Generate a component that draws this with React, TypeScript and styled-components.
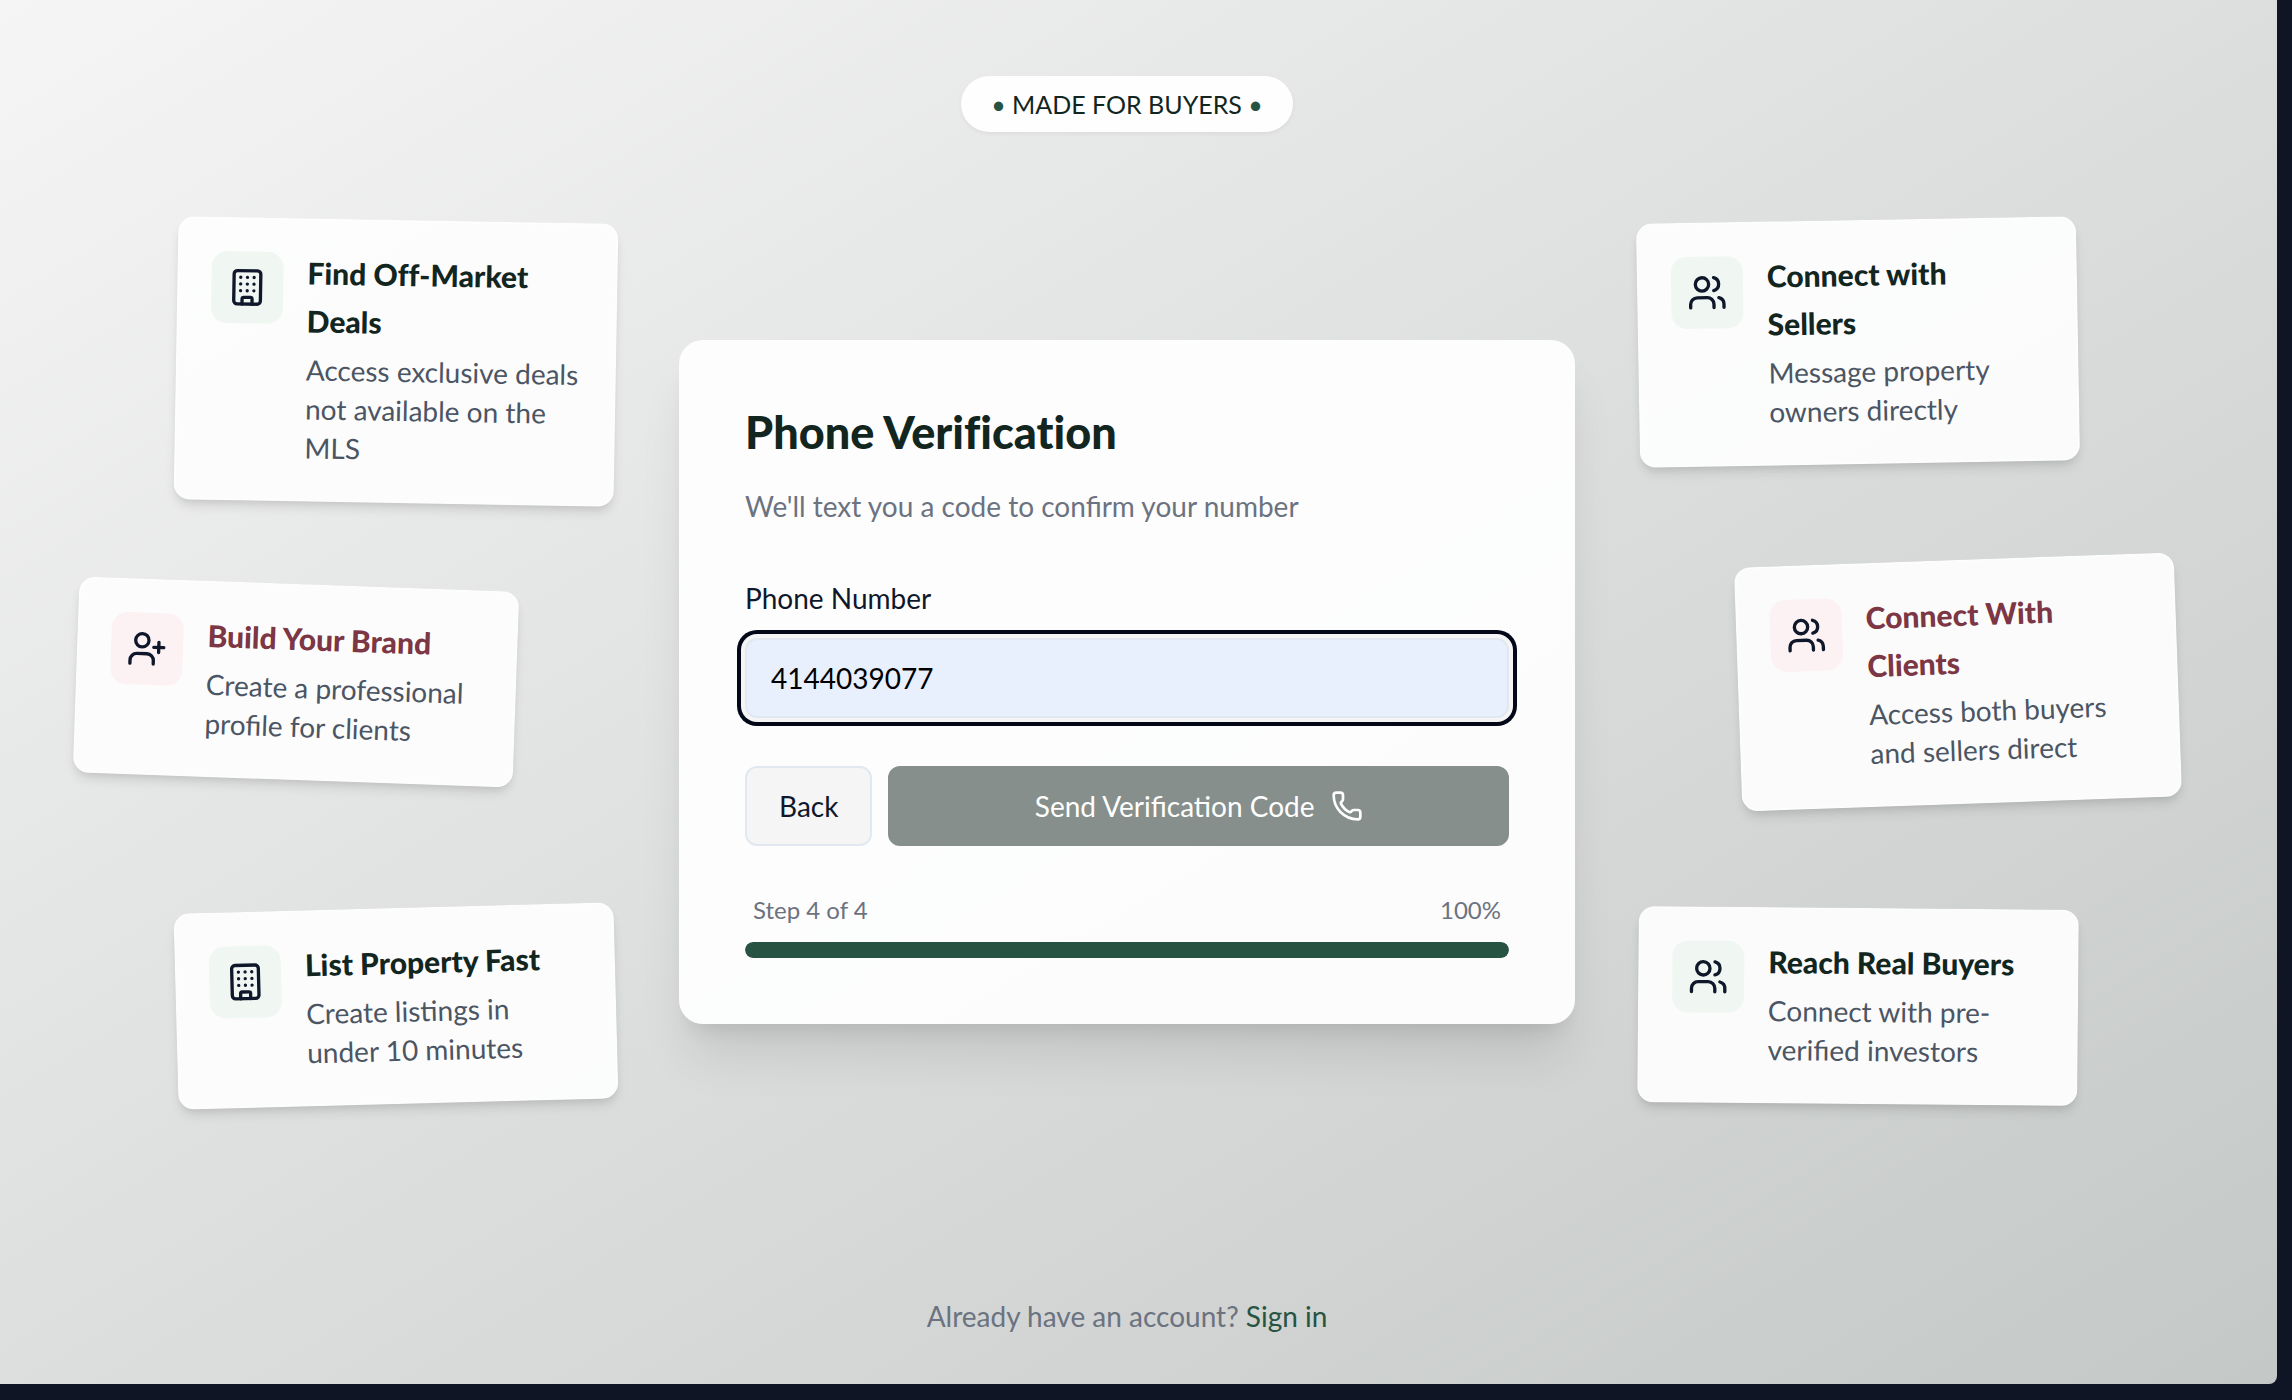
import React, { useState } from "react";
import styled, { createGlobalStyle } from "styled-components";
import { Building, Phone, UserPlus, Users, type LucideIcon } from "lucide-react";

const GlobalStyle = createGlobalStyle`
  *, *::before, *::after { box-sizing: border-box; }
  body {
    margin: 0;
    background: #0f1525;
    color: #0f172a;
    font-family: Lato, "Open Sans", sans-serif;
    font-size: 28px;
    line-height: 40px;
  }
`;

const Page = styled.div`
  display: flex;
  flex-direction: column;
  min-height: calc(100vh - 16px);
  margin: 0 15px 16px 0;
  padding: 76px 23px 48px 0;
  border-bottom-right-radius: 8px;
  background: linear-gradient(to bottom right, #f5f5f5, #c4c8c6);
`;

const Header = styled.header`
  display: flex;
  justify-content: center;
`;

const Pill = styled.p`
  margin: 0;
  padding: 12px 30px;
  border-radius: 28px;
  background: #fefefe;
  box-shadow: 0 2px 4px rgba(0, 0, 0, 0.05);
  color: #12261f;
  font-size: 25px;
  line-height: 32px;
`;

const Dot = styled.span`
  color: #275342;
`;

const Stage = styled.main`
  flex: 1;
  display: grid;
  grid-template-columns: 540px 1fr 540px;
  grid-template-rows: minmax(0, 1fr) auto minmax(0, 1fr);
  grid-auto-flow: column;
  margin-top: 88px;
  padding: 0 76px;
`;

type Tone = "green" | "rose";

const Feature = styled.article<{ $tilt: number; $row: number; $side: "start" | "end" }>`
  grid-row: ${(p) => p.$row};
  align-self: ${(p) => ["start", "center", "end"][p.$row - 1]};
  justify-self: ${(p) => p.$side};
  display: flex;
  align-items: flex-start;
  gap: 24px;
  width: 440px;
  margin-bottom: ${(p) => (p.$row === 3 ? 40 : 0)}px;
  padding: 32px;
  border: 2px solid rgba(255, 255, 255, 0.2);
  border-radius: 16px;
  background: rgba(253, 253, 253, 0.95);
  box-shadow: 0 8px 12px -2px rgba(0, 0, 0, 0.1), 0 4px 8px -4px rgba(0, 0, 0, 0.1);
  transform: rotate(${(p) => p.$tilt}deg);
`;

const IconTile = styled.span<{ $tone: Tone }>`
  flex: none;
  display: grid;
  place-items: center;
  width: 72px;
  height: 72px;
  border-radius: 16px;
  background: ${(p) => (p.$tone === "green" ? "#f0f7f3" : "#fcf1f3")};
`;

const FeatureTitle = styled.h2<{ $tone: Tone }>`
  margin: -4px 0 6px;
  padding-right: 16px;
  color: ${(p) => (p.$tone === "green" ? "#12261f" : "#7c3644")};
  font-size: 30px;
  font-weight: 900;
  font-variant-ligatures: none;
  line-height: 48px;
`;

const FeatureText = styled.p`
  margin: 0;
  color: #4b5563;
  line-height: 39px;
`;

const Card = styled.section`
  grid-column: 2;
  grid-row: 1 / -1;
  place-self: center;
  width: 100%;
  max-width: 896px;
  padding: 66px;
  border-radius: 24px;
  background: rgba(254, 254, 254, 0.95);
  box-shadow: 0 40px 50px -10px rgba(0, 0, 0, 0.1), 0 16px 20px -12px rgba(0, 0, 0, 0.1);
`;

const Title = styled.h1`
  margin: 0;
  color: #12261f;
  font-size: 45px;
  font-weight: 900;
  font-variant-ligatures: none;
  line-height: 52px;
`;

const Subtitle = styled.p`
  margin: 28px 0 0;
  color: #6b7280;
`;

const Form = styled.form`
  display: flex;
  flex-direction: column;
  margin-top: 52px;
`;

const Label = styled.label`
  color: #0f172a;
`;

const PhoneInput = styled.input`
  width: 100%;
  height: 80px;
  margin-top: 20px;
  padding: 0 24px;
  border: 2px solid #e2e8f0;
  border-radius: 12px;
  outline: none;
  background: #e8effd;
  box-shadow: 0 0 0 4px #f5f5f5, 0 0 0 8px #020817;
  color: #000;
  font: inherit;
`;

const Actions = styled.div`
  display: flex;
  gap: 16px;
  margin-top: 48px;
`;

const Button = styled.button<{ $primary?: boolean }>`
  flex: ${(p) => (p.$primary ? "1" : "none")};
  display: flex;
  align-items: center;
  justify-content: center;
  gap: 16px;
  height: 80px;
  padding: 0 32px;
  border: 2px solid ${(p) => (p.$primary ? "#868f8b" : "#e2e8f0")};
  border-radius: 12px;
  background: ${(p) => (p.$primary ? "#868f8b" : "#f5f5f5")};
  color: ${(p) => (p.$primary ? "#fff" : "#0f172a")};
  font: inherit;
`;

const Steps = styled.div`
  display: flex;
  justify-content: space-between;
  margin-top: 48px;
  padding: 0 8px;
  color: #6b7280;
  font-size: 24px;
  line-height: 32px;
`;

const Track = styled.div`
  height: 16px;
  margin-top: 16px;
  border-radius: 8px;
  background: #e5e7eb;
  overflow: hidden;
`;

const Bar = styled.div`
  height: 100%;
  border-radius: 8px;
  background: #275342;
`;

const Footer = styled.footer`
  margin-top: 152px;
  color: #6b7280;
  text-align: center;
`;

const Link = styled.a`
  color: #275342;
  text-decoration: none;
`;

interface FeatureData {
  title: string;
  text: string;
  icon: LucideIcon;
  tone: Tone;
  tilt: number;
  row: number;
  side: "start" | "end";
}

const leftFeatures: FeatureData[] = [
  { title: "Find Off-Market Deals", text: "Access exclusive deals not available on the MLS", icon: Building, tone: "green", tilt: 1, row: 1, side: "end" },
  { title: "Build Your Brand", text: "Create a professional profile for clients", icon: UserPlus, tone: "rose", tilt: 2, row: 2, side: "start" },
  { title: "List Property Fast", text: "Create listings in under 10 minutes", icon: Building, tone: "green", tilt: -1.5, row: 3, side: "end" },
];

const rightFeatures: FeatureData[] = [
  { title: "Connect with Sellers", text: "Message property owners directly", icon: Users, tone: "green", tilt: -1, row: 1, side: "start" },
  { title: "Connect With Clients", text: "Access both buyers and sellers direct", icon: Users, tone: "rose", tilt: -2, row: 2, side: "end" },
  { title: "Reach Real Buyers", text: "Connect with pre-verified investors", icon: Users, tone: "green", tilt: 0.5, row: 3, side: "start" },
];

function FeatureCard({ title, text, icon: Icon, tone, tilt, row, side }: FeatureData) {
  return (
    <Feature $tilt={tilt} $row={row} $side={side}>
      <IconTile $tone={tone}>
        <Icon size={40} aria-hidden />
      </IconTile>
      <div>
        <FeatureTitle $tone={tone}>{title}</FeatureTitle>
        <FeatureText>{text}</FeatureText>
      </div>
    </Feature>
  );
}

export default function App() {
  const [phone, setPhone] = useState("4144039077");
  const step = 4;
  const total = 4;
  const percent = (step / total) * 100;

  return (
    <>
      <GlobalStyle />
      <Page>
        <Header>
          <Pill>
            <Dot>•</Dot> MADE FOR BUYERS <Dot>•</Dot>
          </Pill>
        </Header>
        <Stage>
          {leftFeatures.map((f) => (
            <FeatureCard key={f.title} {...f} />
          ))}
          <Card>
            <Title>Phone Verification</Title>
            <Subtitle>We'll text you a code to confirm your number</Subtitle>
            <Form onSubmit={(e) => e.preventDefault()}>
              <Label htmlFor="phone">Phone Number</Label>
              <PhoneInput id="phone" type="tel" value={phone} onChange={(e) => setPhone(e.target.value)} />
              <Actions>
                <Button type="button">Back</Button>
                <Button type="submit" $primary>
                  Send Verification Code
                  <Phone size={32} aria-hidden />
                </Button>
              </Actions>
            </Form>
            <Steps>
              <span>Step {step} of {total}</span>
              <span>{percent}%</span>
            </Steps>
            <Track>
              <Bar style={{ width: `${percent}%` }} />
            </Track>
          </Card>
          {rightFeatures.map((f) => (
            <FeatureCard key={f.title} {...f} />
          ))}
        </Stage>
        <Footer>
          Already have an account? <Link href="#signin">Sign in</Link>
        </Footer>
      </Page>
    </>
  );
}
